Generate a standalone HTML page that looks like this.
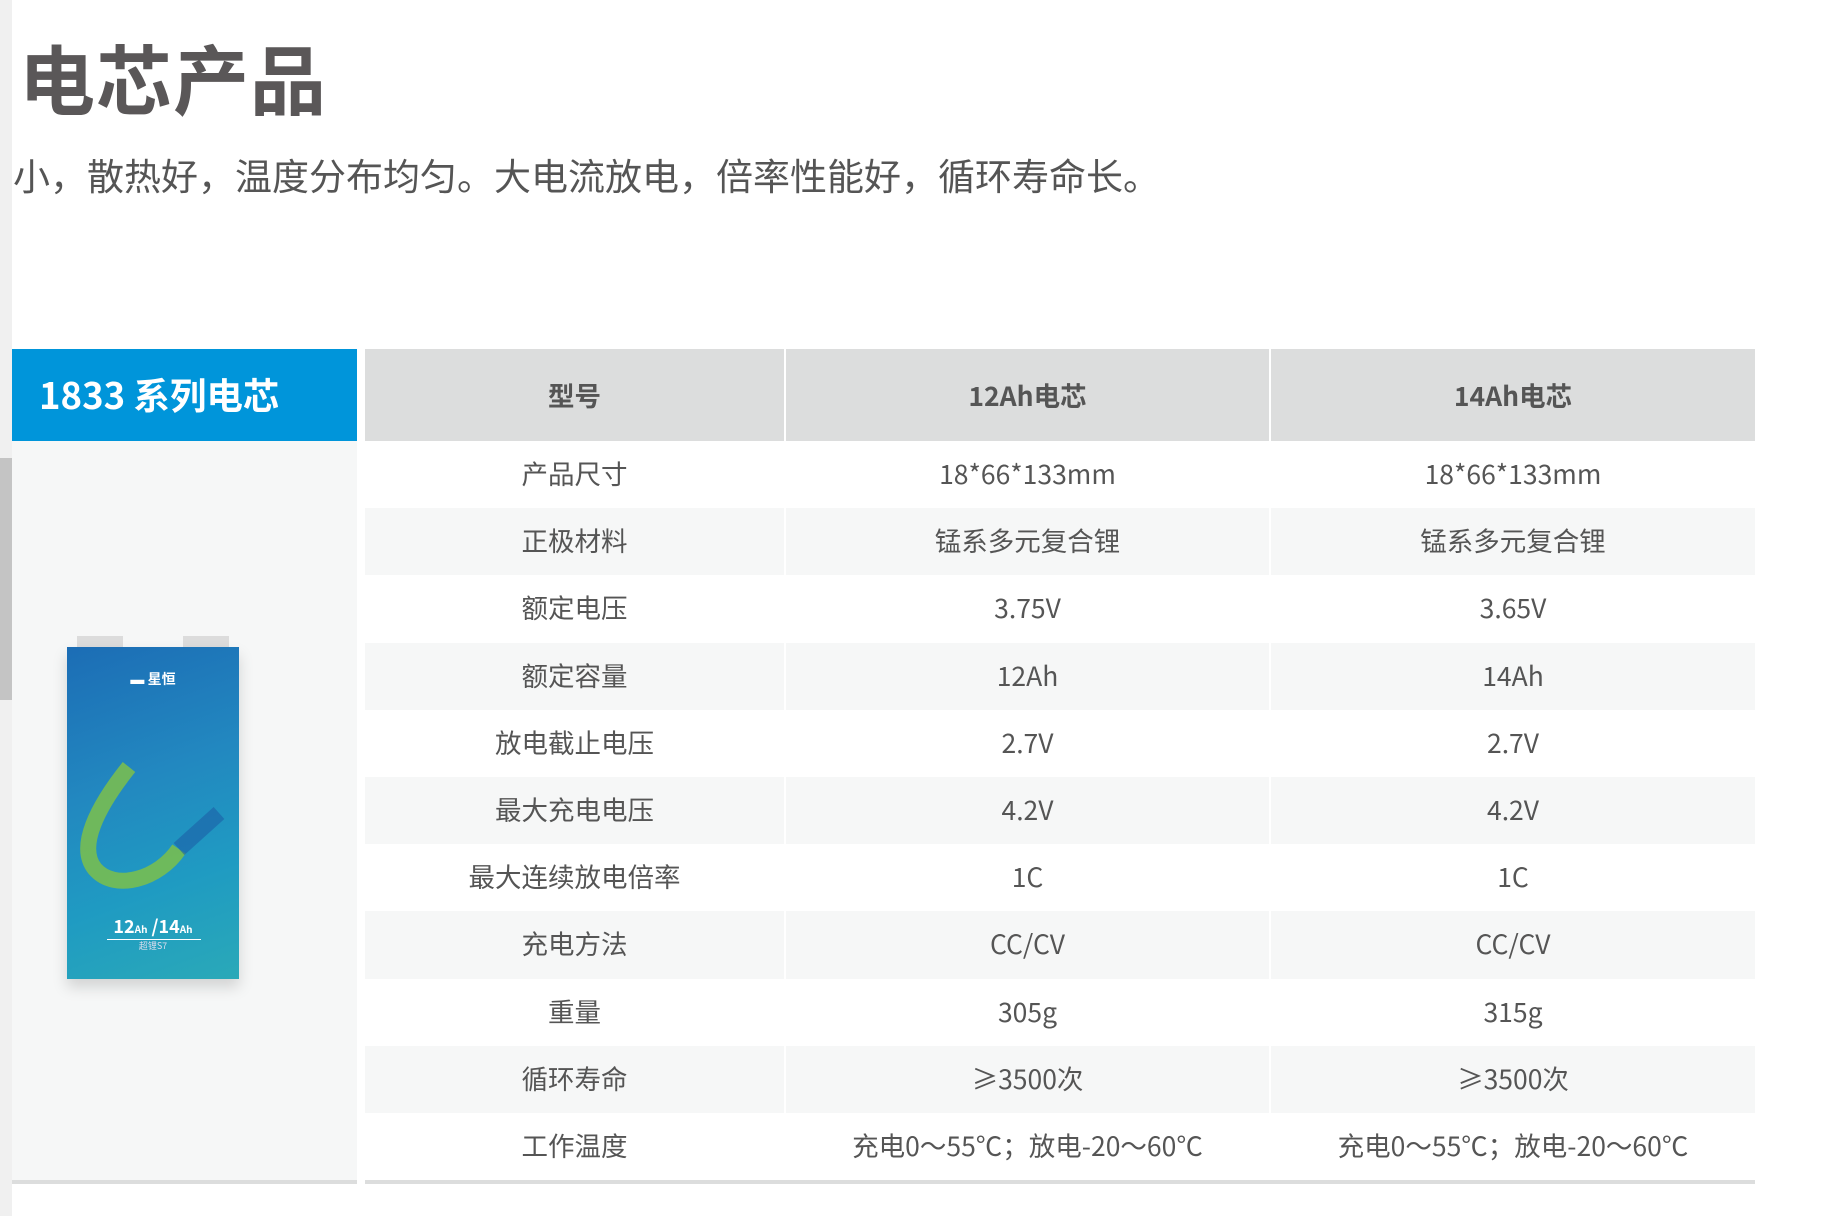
<!DOCTYPE html>
<html><head><meta charset="utf-8"><style>
*{margin:0;padding:0;box-sizing:border-box}
body{width:1828px;height:1216px;background:#fff;position:relative;overflow:hidden;font-family:"Noto Sans CJK SC","Liberation Sans",sans-serif;color:#555}
.sb{position:absolute;left:0;top:0;width:12px;height:1216px;background:#f0f0f0}
.sb2{position:absolute;left:0;top:458px;width:12px;height:242px;background:#c4c4c4}
h1{position:absolute;left:19px;top:27px;font-size:76px;font-weight:bold;color:#5a5758;letter-spacing:1px;line-height:1.3}
.sub{position:absolute;left:13px;top:150px;font-size:37px;color:#555;line-height:1.3}
.bh{position:absolute;left:12px;top:349px;width:345px;height:92px;background:#0095da;color:#fff;font-size:36.5px;font-weight:bold;line-height:90px;padding-left:27px}
.imgcol{position:absolute;left:12px;top:441px;width:345px;height:739px;background:#f6f7f7}
.bl{position:absolute;top:1180px;height:4px;background:#dcdddd}
.row{position:absolute;left:365px;width:1390px;display:flex;height:67.2px}
.row div{height:100%;display:flex;align-items:center;justify-content:center;font-size:26.5px;padding-bottom:4px}
.c1{width:419px;margin-right:2px}.c2{width:483px;margin-right:2px}.c3{width:484px}
.hd div{background:#dcdddd;font-weight:bold;padding-bottom:2px}
.g div{background:#f6f7f7}
.bat{position:absolute;left:67px;top:647px;width:172px;height:332px;background:linear-gradient(160deg,#1c6db5 0%,#2288c0 40%,#1f9bc2 70%,#2aa9b8 100%);box-shadow:0 8px 14px rgba(0,0,0,.15)}
</style></head><body>
<div class="sb"></div><div class="sb2"></div>
<h1>电芯产品</h1>
<div class="sub">小，散热好，温度分布均匀。大电流放电，倍率性能好，循环寿命长。</div>
<div class="bh">1833 系列电芯</div>
<div class="imgcol"></div>
<div style="position:absolute;left:77px;top:636px;width:46px;height:11px;background:#dcdcdc"></div>
<div style="position:absolute;left:183px;top:636px;width:46px;height:11px;background:#dcdcdc"></div>
<div class="bat">
<svg width="172" height="332" style="position:absolute;left:0;top:0">
<path d="M62 120 C30 160 10 200 28 222 C48 245 92 232 112 202" stroke="#7cc04a" stroke-width="16" fill="none" opacity=".85"/>
<path d="M112 202 L152 166" stroke="#1d5fa6" stroke-width="16" fill="none" opacity=".6"/>
</svg>
<div style="position:absolute;top:22px;width:100%;text-align:center;color:#fff;font-size:14px;font-weight:bold">▬ 星恒</div>
<div style="position:absolute;top:266px;width:100%;text-align:center;color:#fff;font-size:18px;font-weight:bold">12<small style="font-size:10px">Ah</small> /14<small style="font-size:10px">Ah</small></div>
<div style="position:absolute;left:40px;top:292px;width:94px;height:1px;background:#fff"></div>
<div style="position:absolute;top:292px;width:100%;text-align:center;color:#dde;font-size:9px">超锂S7</div>
</div>
<div class="row hd" style="top:349px;height:92px"><div class="c1">型号</div><div class="c2">12Ah电芯</div><div class="c3">14Ah电芯</div></div>
<div class="row" style="top:441px"><div class="c1">产品尺寸</div><div class="c2">18*66*133mm</div><div class="c3">18*66*133mm</div></div>
<div class="row g" style="top:508.2px"><div class="c1">正极材料</div><div class="c2">锰系多元复合锂</div><div class="c3">锰系多元复合锂</div></div>
<div class="row" style="top:575.4px"><div class="c1">额定电压</div><div class="c2">3.75V</div><div class="c3">3.65V</div></div>
<div class="row g" style="top:642.6px"><div class="c1">额定容量</div><div class="c2">12Ah</div><div class="c3">14Ah</div></div>
<div class="row" style="top:709.8px"><div class="c1">放电截止电压</div><div class="c2">2.7V</div><div class="c3">2.7V</div></div>
<div class="row g" style="top:777px"><div class="c1">最大充电电压</div><div class="c2">4.2V</div><div class="c3">4.2V</div></div>
<div class="row" style="top:844.2px"><div class="c1">最大连续放电倍率</div><div class="c2">1C</div><div class="c3">1C</div></div>
<div class="row g" style="top:911.4px"><div class="c1">充电方法</div><div class="c2">CC/CV</div><div class="c3">CC/CV</div></div>
<div class="row" style="top:978.6px"><div class="c1">重量</div><div class="c2">305g</div><div class="c3">315g</div></div>
<div class="row g" style="top:1045.8px"><div class="c1">循环寿命</div><div class="c2">≥3500次</div><div class="c3">≥3500次</div></div>
<div class="row" style="top:1113px"><div class="c1">工作温度</div><div class="c2">充电0～55℃；放电-20～60℃</div><div class="c3">充电0～55℃；放电-20～60℃</div></div>
<div class="bl" style="left:12px;width:345px"></div>
<div class="bl" style="left:365px;width:1390px"></div>
</body></html>
